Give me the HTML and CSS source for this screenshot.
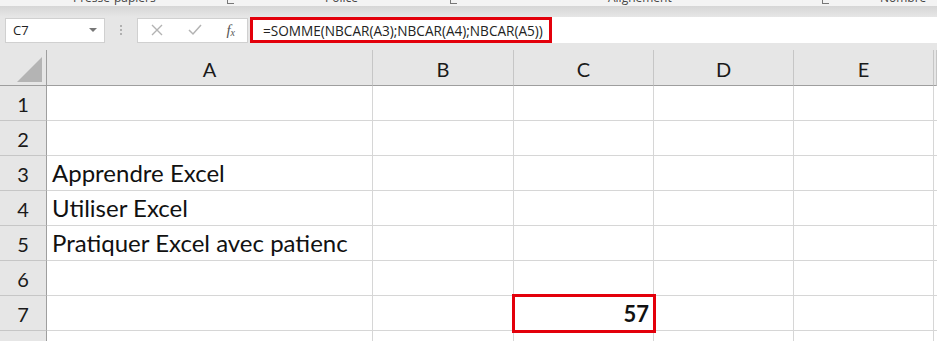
FILE: index.html
```html
<!DOCTYPE html>
<html lang="fr">
<head>
    <meta charset="UTF-8">
    <title>Excel - NBCAR</title>
    <link rel="stylesheet" href="styles.css">
</head>
<body>
    <!-- bas du ruban, coupé -->
    <div class="ribbon">
        <span class="grp g1">Presse-papiers</span><span class="launch l1"></span>
        <span class="grp g2">Police</span><span class="launch l2"></span>
        <span class="grp g3">Alignement</span><span class="launch l3"></span>
        <span class="grp g4">Nombre</span>
    </div>
    <div class="ribbon-shadow"></div>

    <!-- barre de formule -->
    <div class="formula-bar">
        <div class="name-box">
            <span>C7</span>
            <span class="arrow"></span>
        </div>
        <div class="dots"><i></i><i></i><i></i></div>
        <div class="fx-buttons">
            <svg width="12" height="12" viewBox="0 0 12 12"><path d="M1 1 L11 11 M11 1 L1 11" stroke="#b3b3b3" stroke-width="1.4" fill="none"/></svg>
            <svg width="14" height="12" viewBox="0 0 14 12"><path d="M1 6 L5 10 L13 1" stroke="#b3b3b3" stroke-width="1.5" fill="none"/></svg>
            <span class="fx">f<sub>x</sub></span>
        </div>
        <div class="formula-input">
            <span class="formula">=SOMME(NBCAR(A3);NBCAR(A4);NBCAR(A5))</span>
        </div>
    </div>

    <!-- feuille -->
    <div class="sheet" id="sheet"></div>

    <script>
        const cols = ["A", "B", "C", "D", "E", ""];
        const data = {
            "A3": "Apprendre Excel",
            "A4": "Utiliser Excel",
            "A5": "Pratiquer Excel avec patienc",
            "C7": "57"
        };

        const sheet = document.getElementById("sheet");
        let html = '<div class="hd corner"><span class="tri"></span></div>';
        cols.forEach(c => { html += `<div class="hd col">${c}</div>`; });
        for (let r = 1; r <= 8; r++) {
            html += `<div class="hd row">${r}</div>`;
            cols.forEach(c => {
                const ref = c + r;
                const v = data[ref] || "";
                const cls = ref === "C7" ? "cell num" : "cell";
                html += `<div class="${cls}">${v}</div>`;
            });
        }
        sheet.innerHTML = html;
    </script>
</body>
</html>
```

FILE: styles.css
```css
body { margin: 0; background: #e6e6e6; font-family: Lato, "Liberation Sans", sans-serif; overflow: hidden; width: 937px; height: 341px; }

.ribbon { height: 6px; background: #f3f3f3; position: relative; overflow: hidden; font-family: "Open Sans", sans-serif; font-size: 12px; color: #444; }
.grp { position: absolute; top: -11px; }
.g1 { left: 73px; } .g2 { left: 325px; } .g3 { left: 608px; } .g4 { left: 880px; }
.launch { position: absolute; top: 0; width: 6px; height: 3px; border-left: 1px solid #777; border-bottom: 1px solid #777; }
.l1 { left: 227px; } .l2 { left: 450px; } .l3 { left: 822px; }
.ribbon-shadow { height: 11px; background: linear-gradient(#d6d6d6, #e6e6e6); }

.formula-bar { display: flex; align-items: center; height: 26px; padding-left: 5px; }
.name-box { width: 100px; height: 25px; background: #fff; border: 1px solid #d0d0d0; box-sizing: border-box; display: flex; align-items: center; justify-content: space-between; padding: 0 7px 0 7px; font-family: "Open Sans", sans-serif; font-size: 13px; color: #222; }
.arrow { width: 0; height: 0; border-left: 4px solid transparent; border-right: 4px solid transparent; border-top: 4px solid #777; }
.dots { width: 32px; display: flex; flex-direction: column; align-items: center; gap: 2px; }
.dots i { width: 2px; height: 2px; background: #b0b0b0; }
.fx-buttons { width: 111px; height: 25px; background: #fff; border: 1px solid #d0d0d0; box-sizing: border-box; display: flex; align-items: center; justify-content: space-between; padding: 0 12px 0 13px; }
.fx { font-family: "Liberation Serif", serif; font-style: italic; font-size: 15px; color: #555; line-height: 1; }
.fx sub { font-size: 10px; vertical-align: -1px; }
.formula-input { flex: 1; height: 26px; margin-left: 2px; background: #fff; display: flex; align-items: stretch; }
.formula { font-family: "Open Sans", sans-serif; font-size: 13.6px; color: #222; padding: 0 6px 0 10px; display: flex; align-items: center; box-sizing: border-box; border: 3px solid #e3000b; }

.sheet { display: grid; grid-template-columns: 47px 326px 141px 140px 140px 140px 3px; grid-template-rows: 36px repeat(8, 35px); margin-top: 7px; background: #fff; }
.hd { background: #e6e6e6; color: #1a1a1a; font-size: 20px; display: flex; align-items: center; justify-content: center; box-sizing: border-box; }
.hd.col { border-right: 1px solid #c6c6c6; border-bottom: 1px solid #9e9e9e; padding-top: 2px; }
.hd.row { border-right: 1px solid #9e9e9e; border-bottom: 1px solid #c6c6c6; padding-top: 1px; }
.corner { border-right: 1px solid #9e9e9e; border-bottom: 1px solid #9e9e9e; position: relative; }
.tri { position: absolute; right: 4px; bottom: 3px; width: 0; height: 0; border-left: 25px solid transparent; border-bottom: 25px solid #b4b4b4; }

.cell { border-right: 1px solid #d6d6d6; border-bottom: 1px solid #d6d6d6; box-sizing: border-box; font-size: 24px; color: #111; white-space: nowrap; overflow: hidden; padding: 0 0 3px 5px; display: flex; align-items: flex-end; }
.cell.num { justify-content: flex-end; font-weight: bold; font-size: 22px; padding-right: 4px; position: relative; outline: 3px solid #e3000b; outline-offset: -1px; overflow: visible; }
```
